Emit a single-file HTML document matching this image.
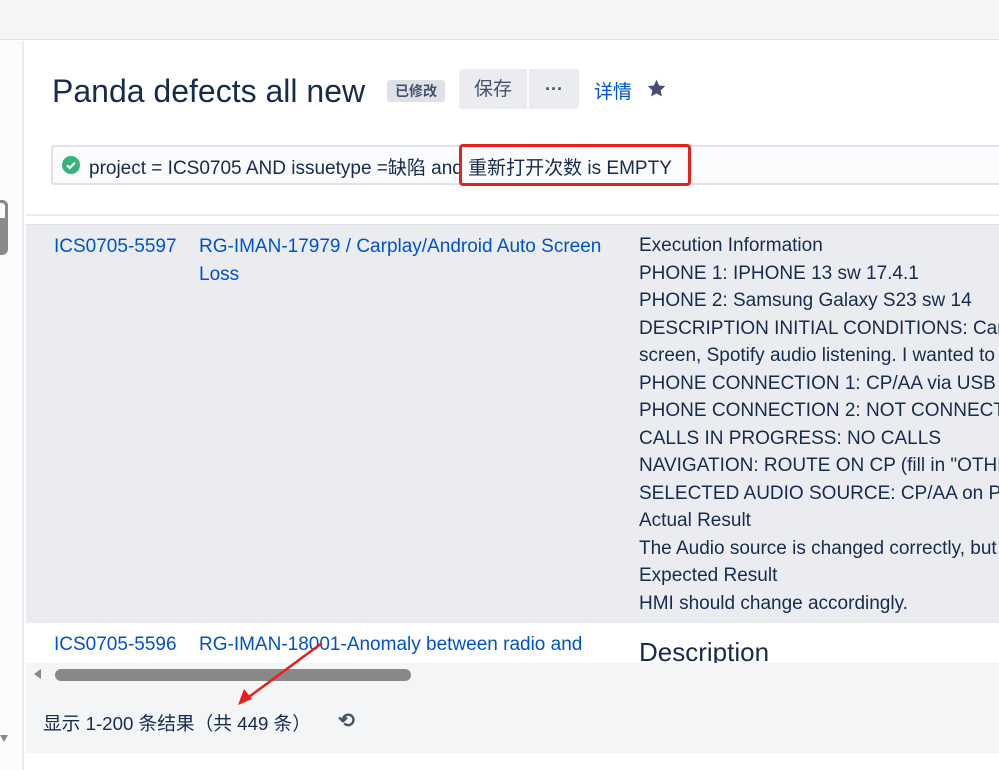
<!DOCTYPE html>
<html><head><meta charset="utf-8"><style>
*{margin:0;padding:0;box-sizing:border-box}
body{width:999px;height:770px;overflow:hidden;background:#fff;font-family:"Liberation Sans","Noto Sans CJK SC",sans-serif;position:relative;color:#172b4d}
.a{position:absolute;white-space:nowrap}
.l{color:#0052cc;font-size:19px}
.t{font-size:19px;color:#172b4d}
</style></head><body>
<div class="a" style="left:0;top:0;width:999px;height:40px;background:#f4f5f7;border-bottom:1px solid #dfe1e6"></div>
<div class="a" style="left:0;top:41px;width:24px;height:729px;background:#fafbfc;border-right:2px solid #ebecf0"></div>
<div class="a" style="left:0;top:200px;width:8px;height:55px;border-radius:0 6px 6px 0;background:#8a8a8a"></div>
<div class="a" style="left:0;top:200px;width:8px;height:18px;background:#fafbfc;border-right:3px solid #888;border-top:3px solid #888;border-radius:0 6px 0 0"></div>
<div class="a" style="left:0;top:735px;width:0;height:0;border-left:4px solid transparent;border-right:4px solid transparent;border-top:7px solid #888"></div>
<div class="a" style="left:29px;top:362px;width:3px;height:20px;background:radial-gradient(circle,#42526e 1.2px,transparent 1.5px) 0 0/3px 5px"></div>
<div class="a" style="left:52px;top:70px;font-size:32px;line-height:42px;color:#172b4d">Panda defects all new</div>
<div class="a" style="left:387px;top:80px;width:58px;height:22px;background:#dfe1e6;border-radius:3px;font-size:14px;font-weight:bold;color:#42526e;text-align:center;line-height:22px">已修改</div>
<div class="a" style="left:459px;top:69px;width:68px;height:40px;background:#ebecf0;border-radius:3px 0 0 3px;font-size:19px;text-align:center;line-height:42px;color:#42526e">保存</div>
<div class="a" style="left:529px;top:69px;width:50px;height:40px;background:#ebecf0;border-radius:0 3px 3px 0;font-size:18px;text-align:center;line-height:40px;color:#42526e;font-weight:bold">···</div>
<div class="a" style="left:594px;top:77px;font-size:19px;color:#0052cc">详情</div>
<svg class="a" style="left:646px;top:78px" width="21" height="21" viewBox="0 0 24 24"><path d="M12 2l3 6.5 7 .8-5.2 4.8 1.4 7L12 17.6 5.8 21.1l1.4-7L2 9.3l7-.8z" fill="#42526e"/></svg>
<div class="a" style="left:51px;top:145px;width:960px;height:40px;border:2px solid #dfe1e6;border-radius:3px;background:#fafbfc"></div>
<svg class="a" style="left:61px;top:155px" width="20" height="20" viewBox="0 0 20 20"><circle cx="10" cy="10" r="9" fill="#36b37e"/><path d="M6 10.3l2.7 2.6L14 7.6" stroke="#fff" stroke-width="2.2" fill="none"/></svg>
<div class="a" style="left:89px;top:153px;font-size:19px;color:#172b4d">project = ICS0705 AND issuetype =缺陷 and 重新打开次数 is EMPTY</div>
<div class="a" style="left:459px;top:144px;width:232px;height:42px;border:3px solid #e6201e;border-radius:4px"></div>
<div class="a" style="left:26px;top:214px;width:973px;height:2px;background:#ebecf0"></div>
<div class="a" style="left:26px;top:224px;width:973px;height:399px;background:#ebecf0;border-top:1px solid #dfe1e6"></div>
<div class="a l" style="left:54px;top:233px;line-height:27.5px">ICS0705-5597</div>
<div class="a l" style="left:199px;top:233px;line-height:27.5px">RG-IMAN-17979 / Carplay/Android Auto Screen<br>Loss</div>
<div class="a t" style="left:639px;top:232px;line-height:27.5px">Execution Information<br>PHONE 1: IPHONE 13 sw 17.4.1<br>PHONE 2: Samsung Galaxy S23 sw 14<br>DESCRIPTION INITIAL CONDITIONS: Carplay<br>screen, Spotify audio listening. I wanted to<br>PHONE CONNECTION 1: CP/AA via USB cab<br>PHONE CONNECTION 2: NOT CONNECTED<br>CALLS IN PROGRESS: NO CALLS<br>NAVIGATION: ROUTE ON CP (fill in "OTHER<br>SELECTED AUDIO SOURCE: CP/AA on PHON<br>Actual Result<br>The Audio source is changed correctly, but<br>Expected Result<br>HMI should change accordingly.</div>
<div class="a l" style="left:54px;top:634px">ICS0705-5596</div>
<div class="a l" style="left:199px;top:634px">RG-IMAN-18001-Anomaly between radio and</div>
<div class="a" style="left:639px;top:637px;font-size:26px;color:#172b4d">Description</div>
<div class="a" style="left:26px;top:663px;width:973px;height:22px;background:#f4f5f7"></div>
<div class="a" style="left:34px;top:669px;width:0;height:0;border-top:5px solid transparent;border-bottom:5px solid transparent;border-right:7px solid #888"></div>
<div class="a" style="left:55px;top:669px;width:356px;height:12px;border-radius:6px;background:#888"></div>
<div class="a" style="left:26px;top:685px;width:973px;height:68px;background:#f4f5f7"></div>
<div class="a" style="left:43px;top:709px;font-size:18.7px;color:#172b4d">显示 1-200 条结果（共 449 条）</div>
<div class="a" style="left:338px;top:708px;font-size:20px;color:#42526e;font-weight:bold">⟲</div>
<svg class="a" style="left:236px;top:640px" width="90" height="66"><path d="M86 3L6 62" stroke="#e6201e" stroke-width="2.5"/><path d="M2 65l6-16 8 10z" fill="#e6201e"/></svg>
</body></html>
